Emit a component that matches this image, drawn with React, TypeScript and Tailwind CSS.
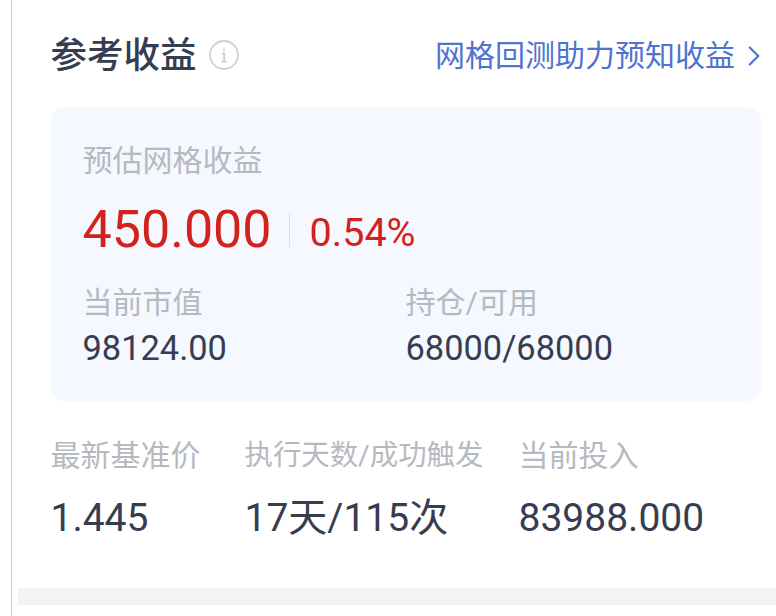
import { ChevronRight } from "lucide-react";

const sans = "font-['Roboto','Noto_Sans_CJK_SC',sans-serif]";

function Stat({ label, value, labelSize, className }: { label: string; value: string; labelSize: string; className?: string }) {
  return (
    <div className={className}>
      <div className={`${labelSize} leading-[40px] text-[#b7b9c0]`}>{label}</div>
      <div className="mt-[20px] text-[39px] leading-[44px] text-[#373d50]">{value}</div>
    </div>
  );
}

export default function App() {
  return (
    <div className={`h-[616px] w-[776px] overflow-hidden bg-white pl-[11px] ${sans}`}>
      <div className="h-full border-l-[1.5px] border-[#c9c9c9] pt-[35px]">
        <div className="flex h-[42px] items-center pl-[38.5px] pr-[5.5px]">
          <h2 className="text-[36.5px] font-medium leading-[42px] text-[#373d50]">参考收益</h2>
          <svg viewBox="0 0 30 30" className="ml-[12px] -mt-[2px] h-[30px] w-[30px]" fill="none">
            <circle cx="15" cy="15" r="14" stroke="#d0d0d0" strokeWidth="1.8" />
            <path d="M15 8.5v2.2M12.8 13.5h2.4v8M12.6 21.5h5" stroke="#d0d0d0" strokeWidth="1.8" />
          </svg>
          <a className="ml-auto flex items-center text-[30px] leading-[42px] text-[#4f73cf]">
            网格回测助力预知收益
            <ChevronRight className="ml-[1.5px] h-[34px] w-[34px]" strokeWidth={1.6} />
          </a>
        </div>

        <div className="ml-[38.5px] mt-[30px] h-[294px] w-[710px] rounded-[14px] bg-[#f5f8fe] pl-[32px] pt-[34px]">
          <div className="text-[30px] leading-[40px] text-[#b7b9c0]">预估网格收益</div>
          <div className="mt-[21px] flex h-[56px] items-center">
            <span className="text-[52px] leading-[56px] text-[#d3211d]">450.000</span>
            <span className="ml-[17px] h-[33px] w-px bg-[#dcdde0]" />
            <span className="ml-[20px] mt-[6px] text-[39.5px] leading-[44px] text-[#d3211d]">0.54%</span>
          </div>
          <div className="mt-[27px] grid grid-cols-[323px_1fr]">
            <div>
              <div className="text-[30px] leading-[36px] text-[#b7b9c0]">当前市值</div>
              <div className="mt-[5px] text-[34.4px] leading-[44px] text-[#373d50]">98124.00</div>
            </div>
            <div>
              <div className="text-[30px] leading-[36px] text-[#b7b9c0]">持仓/可用</div>
              <div className="mt-[5px] text-[34.4px] leading-[44px] text-[#373d50]">68000/68000</div>
            </div>
          </div>
        </div>

        <div className="mt-[35px] flex pl-[38.5px]">
          <Stat label="最新基准价" labelSize="text-[30px]" value="1.445" className="w-[194px]" />
          <Stat label="执行天数/成功触发" labelSize="text-[28.4px]" value="17天/115次" className="w-[274px]" />
          <Stat label="当前投入" labelSize="text-[30px]" value="83988.000" />
        </div>

        <div className="ml-[5.5px] mt-[48px] h-[17px] bg-[#f3f3f3]" />
      </div>
    </div>
  );
}
